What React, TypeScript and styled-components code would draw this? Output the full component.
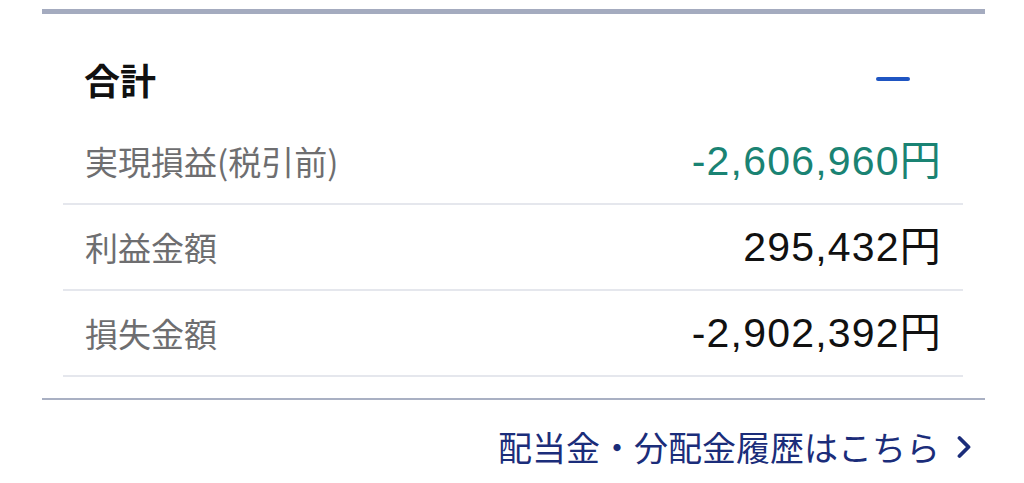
import styled, { createGlobalStyle } from "styled-components";

const GlobalStyle = createGlobalStyle`
  body {
    margin: 0;
    background: #ffffff;
    font-family: "Noto Sans CJK JP", "Noto Sans", sans-serif;
  }
`;

const rows = [
  { label: "実現損益(税引前)", value: "-2,606,960円", positive: true },
  { label: "利益金額", value: "295,432円", positive: false },
  { label: "損失金額", value: "-2,902,392円", positive: false },
];

function App() {
  return (
    <>
      <GlobalStyle />
      <Page>
        <Panel>
          <Header>
            <Title>合計</Title>
            <Collapse aria-label="閉じる" />
          </Header>
          <List>
            {rows.map((row) => (
              <Row key={row.label}>
                <Label>{row.label}</Label>
                <Value $accent={row.positive}>{row.value}</Value>
              </Row>
            ))}
          </List>
        </Panel>
        <LinkRow>
          <HistoryLink href="#">
            配当金・分配金履歴はこちら
            <svg width="14" height="24" viewBox="0 0 14 24" fill="none">
              <path
                d="M2.5 3 L11.5 12 L2.5 21"
                stroke="#1b2d7a"
                strokeWidth="3.8"
                strokeLinecap="round"
                strokeLinejoin="round"
              />
            </svg>
          </HistoryLink>
        </LinkRow>
      </Page>
    </>
  );
}

const Page = styled.main`
  width: 943px;
  margin-left: 42px;
  padding-top: 9px;
`;

const Panel = styled.section`
  border-top: 5px solid #a4abbf;
  border-bottom: 2px solid #a9b0c3;
  padding-bottom: 21px;
`;

const Header = styled.div`
  display: flex;
  align-items: center;
  justify-content: space-between;
  padding: 47px 75px 22px 42px;
  height: 36px;
`;

const Title = styled.h2`
  margin: 0;
  font-size: 36px;
  line-height: 36px;
  font-weight: 700;
  color: #111111;
`;

const Collapse = styled.button`
  width: 34px;
  height: 4px;
  padding: 0;
  border: none;
  border-radius: 2px;
  background: #1f55c2;
`;

const List = styled.div`
  margin: 0 22px 0 21px;
`;

const Row = styled.div`
  display: flex;
  align-items: center;
  justify-content: space-between;
  height: 84px;
  padding: 0 21px 0 22px;
  border-bottom: 2px solid #e5e7ed;
`;

const Label = styled.span`
  font-size: 33px;
  color: #6e6e70;
  line-height: 1;
`;

const Value = styled.span<{ $accent: boolean }>`
  font-family: "Liberation Sans", "Noto Sans CJK JP", sans-serif;
  font-size: 41px;
  letter-spacing: 1.2px;
  line-height: 1;
  color: ${(p) => (p.$accent ? "#1a8373" : "#111111")};
`;

const LinkRow = styled.div`
  display: flex;
  justify-content: flex-end;
  padding: 27px 14px 0 0;
`;

const HistoryLink = styled.a`
  display: flex;
  align-items: center;
  gap: 17px;
  font-size: 34px;
  line-height: 40px;
  color: #1b2d7a;
  text-decoration: none;
`;

export default App;
